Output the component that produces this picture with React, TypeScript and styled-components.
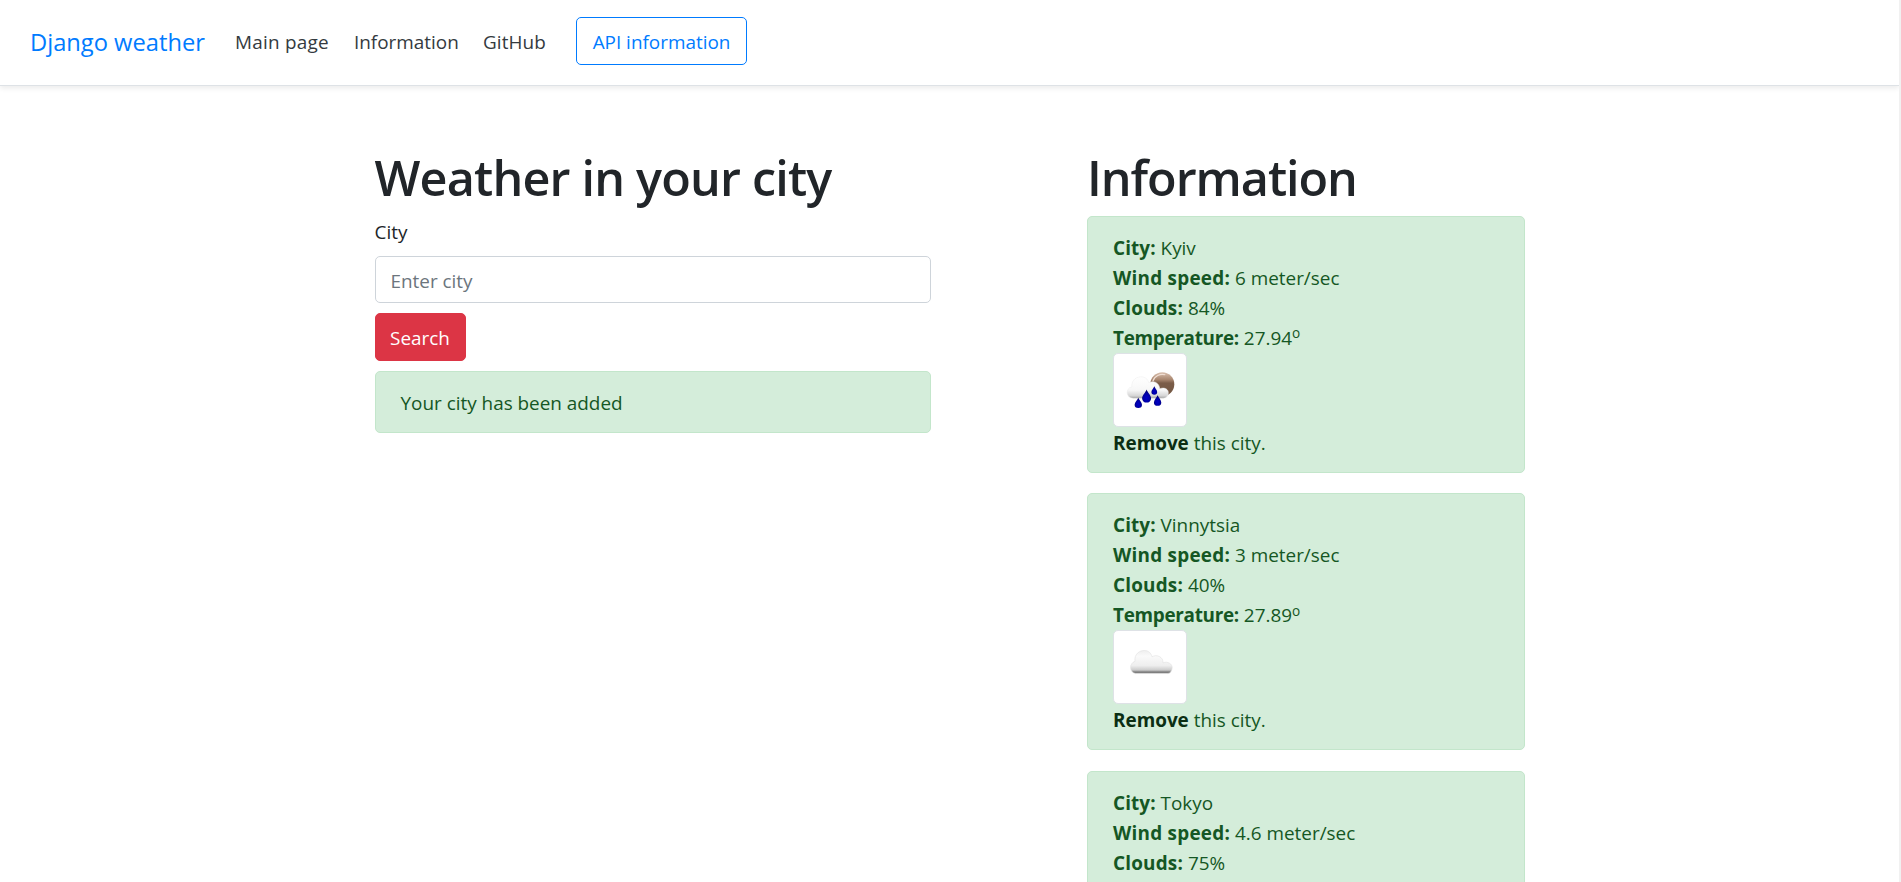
import React from 'react';
import styled, { createGlobalStyle } from 'styled-components';

const GlobalStyle = createGlobalStyle`
  *, *::before, *::after { box-sizing: border-box; }
  html { overflow: hidden; background: #fff; }
  body {
    margin: 0;
    height: 882px;
    overflow: hidden;
    font-family: 'Open Sans', 'Noto Sans', sans-serif;
    font-size: 18.9px;
    line-height: 30px;
    color: #212529;
    background: #fff;
  }
`;

const Page = styled.div`
  height: 882px;
  overflow: hidden;
  border-right: 2px solid #f1f1f1;
`;

const Header = styled.header`
  display: flex;
  align-items: center;
  height: 86px;
  padding: 0 30px 3px;
  border-bottom: 1px solid #dee2e6;
  box-shadow: 0 2.5px 5px rgba(0, 0, 0, 0.075);
`;

const Brand = styled.a`
  width: 195px;
  padding-top: 2px;
  font-size: 23.7px;
  white-space: nowrap;
  color: #007bff;
`;

const Nav = styled.nav`
  display: flex;
  padding-top: 1px;
  margin-right: 20px;
`;

const NavLink = styled.a<{ $width: number; $spacing?: number }>`
  width: ${(p) => p.$width}px;
  padding: 0 10px;
  letter-spacing: ${(p) => p.$spacing ?? 0}px;
  white-space: nowrap;
  color: #343a40;
`;

const Button = styled.button<{ $solid?: boolean; $width: number }>`
  display: block;
  width: ${(p) => p.$width}px;
  height: 48px;
  padding: 1px 0 0;
  border: 1px solid ${(p) => (p.$solid ? '#dc3545' : '#007bff')};
  border-radius: 5px;
  background: ${(p) => (p.$solid ? '#dc3545' : 'transparent')};
  color: ${(p) => (p.$solid ? '#fff' : '#007bff')};
  font: inherit;
  white-space: nowrap;
`;

const Container = styled.main`
  display: flex;
  width: 1425px;
  margin: 60px auto 0;
  padding: 0 18.75px 0 137.5px;
`;

const FormColumn = styled.section`
  width: 556.25px;
  margin-right: 156.25px;
`;

const InfoColumn = styled.section`
  width: 437.5px;
`;

const Title = styled.h1<{ $spacing: number }>`
  margin: 0 0 9px;
  padding-top: 1px;
  font-size: 48.5px;
  font-weight: 600;
  line-height: 60px;
  letter-spacing: ${(p) => p.$spacing}px;
  white-space: nowrap;
`;

const Label = styled.label`
  display: block;
  padding-top: 1px;
  margin-bottom: 9px;
`;

const Input = styled.input`
  display: block;
  width: 100%;
  height: 47px;
  margin-bottom: 10px;
  padding: 2px 15px 0;
  border: 1px solid #ced4da;
  border-radius: 5px;
  font: inherit;
  &::placeholder { color: #6c757d; opacity: 1; }
`;

const Alert = styled.div`
  padding: 16px 25px 14px;
  border: 1px solid #c3e6cb;
  border-radius: 5px;
  background: #d4edda;
  color: #155724;
`;

const Notice = styled(Alert)`
  margin-top: 10px;
`;

const CityCard = styled(Alert)`
  margin-bottom: 20.8px;
  height: 256.6px;
`;

const Line = styled.div`
  height: 30px;
  white-space: nowrap;
`;

const Strong = styled.b<{ $dark?: boolean; $spacing?: number }>`
  font-weight: 700;
  letter-spacing: ${(p) => p.$spacing ?? 0}px;
  color: ${(p) => (p.$dark ? '#0b2e13' : 'inherit')};
`;

const Sup = styled.sup`
  position: relative;
  top: -0.5em;
  font-size: 72%;
  line-height: 0;
  vertical-align: baseline;
`;

const Thumb = styled.div`
  width: 74px;
  height: 74px;
  margin: -0.4px 0 1.4px;
  border: 1px solid #dee2e6;
  border-radius: 5px;
  background: #fff;
  svg { display: block; margin: -1px; }
`;

const DROP = 'M0-6C1-3 4-.5 4 2.5A4 4 0 0 1-4 2.5C-4-.5-1-3 0-6Z';

const RainIcon = () => (
  <svg width="74" height="74" viewBox="-1.3 -.3 74 74">
    <defs>
      <linearGradient id="moon" x1="0" y1="0" x2="0" y2="1">
        <stop offset="0" stopColor="#d9bfae" />
        <stop offset=".3" stopColor="#a98770" />
        <stop offset=".45" stopColor="#7a5c48" />
        <stop offset="1" stopColor="#725642" />
      </linearGradient>
      <linearGradient id="rainCloud" gradientUnits="userSpaceOnUse" x1="0" y1="23" x2="0" y2="46">
        <stop offset="0" stopColor="#fff" />
        <stop offset=".6" stopColor="#f7f7f7" />
        <stop offset=".85" stopColor="#d5d5d5" />
        <stop offset="1" stopColor="#888" />
      </linearGradient>
      <radialGradient id="drop" cx=".5" cy=".65" r=".6">
        <stop offset="0" stopColor="#0000c8" />
        <stop offset=".6" stopColor="#0000a4" />
        <stop offset="1" stopColor="#000060" />
      </radialGradient>
    </defs>
    <circle cx="48" cy="31" r="12" fill="url(#moon)" />
    <path d="M38.500 28C40 22.500 46 20 51 21.500" fill="none" stroke="#f0dfd4" strokeWidth="1.200" />
    <path
      d="M19 45C11 44.500 11 35 17.500 33.500C17 26 23 23 28 23.500C32 24 34 27 34.500 29.500C40 26.500 45 30 45.500 35.500C50 33.500 54.500 36 54 40C53.500 44 51 45 48 45Z"
      fill="url(#rainCloud)"
      stroke="#ececec"
      strokeWidth=".5"
    />
    <g fill="url(#drop)">
      <path d={DROP} transform="translate(24 49.300) scale(.92 .82)" />
      <path d={DROP} transform="translate(32.300 42.500) scale(1.120 1.050)" />
      <path d={DROP} transform="translate(40 37) scale(.72 .68)" />
      <path d={DROP} transform="translate(43.300 47) scale(.92 .85)" />
    </g>
  </svg>
);

const CloudIcon = () => (
  <svg width="74" height="74" viewBox="-.5 -.3 74 74">
    <defs>
      <linearGradient id="cloud" gradientUnits="userSpaceOnUse" x1="0" y1="20" x2="0" y2="43.500">
        <stop offset="0" stopColor="#eee" />
        <stop offset=".25" stopColor="#fafafa" />
        <stop offset=".65" stopColor="#eee" />
        <stop offset=".84" stopColor="#ccc" />
        <stop offset=".93" stopColor="#777" />
        <stop offset="1" stopColor="#999" />
      </linearGradient>
    </defs>
    <path
      d="M22 43.300C15.500 42 15.500 33 21.500 31C20.500 24 26 20 31 20.200C35.500 20.400 37.500 23 38.500 26.500C43.500 23.500 50 27 49.500 32.500C54.500 30.500 59 34 58.700 37.500C58.400 41 56.500 43.300 54 43.300Z"
      fill="url(#cloud)"
      stroke="#e0e0e0"
      strokeWidth=".6"
    />
  </svg>
);

interface City {
  name: string;
  wind: string;
  clouds: string;
  temperature: string;
  icon: React.ReactNode;
}

const cities: City[] = [
  { name: 'Kyiv', wind: '6', clouds: '84', temperature: '27.94', icon: <RainIcon /> },
  { name: 'Vinnytsia', wind: '3', clouds: '40', temperature: '27.89', icon: <CloudIcon /> },
  { name: 'Tokyo', wind: '4.6', clouds: '75', temperature: '', icon: null },
];

export default function App() {
  return (
    <Page>
      <GlobalStyle />
      <Header>
        <Brand>Django weather</Brand>
        <Nav>
          <NavLink $width={119} $spacing={0.25}>Main page</NavLink>
          <NavLink $width={129}>Information</NavLink>
          <NavLink $width={83} $spacing={0.1}>GitHub</NavLink>
        </Nav>
        <Button $width={171}>API information</Button>
      </Header>
      <Container>
        <FormColumn>
          <Title $spacing={-0.8}>Weather in your city</Title>
          <Label htmlFor="city">City</Label>
          <Input id="city" placeholder="Enter city" />
          <Button $solid $width={91}>Search</Button>
          <Notice>Your city has been added</Notice>
        </FormColumn>
        <InfoColumn>
          <Title $spacing={-1.03}>Information</Title>
          {cities.map((city) => (
            <CityCard key={city.name}>
              <Line><Strong $spacing={0.1}>City:</Strong> {city.name}</Line>
              <Line><Strong $spacing={0.25}>Wind speed:</Strong> {city.wind} meter/sec</Line>
              <Line><Strong $spacing={0.19}>Clouds:</Strong> {city.clouds}%</Line>
              {city.temperature && (
                <>
                  <Line><Strong $spacing={-0.3}>Temperature:</Strong> {city.temperature}<Sup>o</Sup></Line>
                  <Thumb>{city.icon}</Thumb>
                  <Line><Strong $dark>Remove</Strong> this city.</Line>
                </>
              )}
            </CityCard>
          ))}
        </InfoColumn>
      </Container>
    </Page>
  );
}
